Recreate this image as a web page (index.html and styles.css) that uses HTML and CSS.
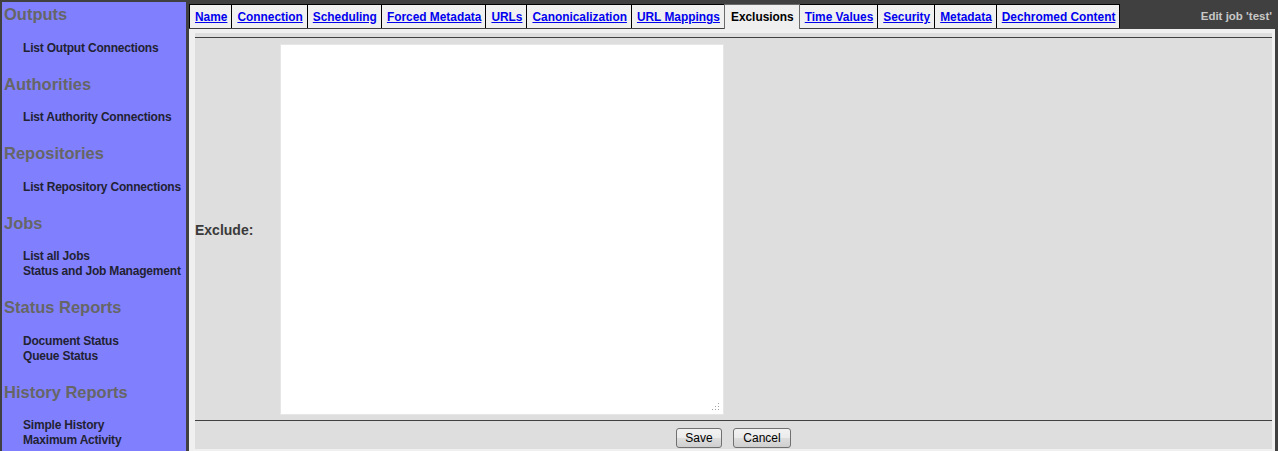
FILE: index.html
```html
<!DOCTYPE html>
<html>
<head>
<meta charset="utf-8">
<title>Edit job</title>
<link rel="stylesheet" href="styles.css">
</head>
<body>
<div class="page">
  <nav class="sidebar">
    <div class="nav-section">
      <div class="nav-head">Outputs</div>
      <ul class="nav-links"><li>List Output Connections</li></ul>
    </div>
    <div class="nav-section">
      <div class="nav-head">Authorities</div>
      <ul class="nav-links"><li>List Authority Connections</li></ul>
    </div>
    <div class="nav-section">
      <div class="nav-head">Repositories</div>
      <ul class="nav-links"><li>List Repository Connections</li></ul>
    </div>
    <div class="nav-section">
      <div class="nav-head">Jobs</div>
      <ul class="nav-links"><li>List all Jobs</li><li>Status and Job Management</li></ul>
    </div>
    <div class="nav-section">
      <div class="nav-head">Status Reports</div>
      <ul class="nav-links"><li>Document Status</li><li>Queue Status</li></ul>
    </div>
    <div class="nav-section">
      <div class="nav-head">History Reports</div>
      <ul class="nav-links"><li>Simple History</li><li>Maximum Activity</li></ul>
    </div>
  </nav>
  <main class="main">
    <div class="header">
      <div class="tabs">
        <a class="tab first" href="#">Name</a>
        <a class="tab" href="#">Connection</a>
        <a class="tab" href="#">Scheduling</a>
        <a class="tab" href="#">Forced Metadata</a>
        <a class="tab" href="#">URLs</a>
        <a class="tab" href="#">Canonicalization</a>
        <a class="tab" href="#">URL Mappings</a>
        <span class="tab active">Exclusions</span>
        <a class="tab" href="#">Time Values</a>
        <a class="tab" href="#">Security</a>
        <a class="tab" href="#">Metadata</a>
        <a class="tab" href="#">Dechromed Content</a>
      </div>
      <div class="title">Edit job 'test'</div>
    </div>
    <div class="frame">
      <div class="panel">
        <div class="rule"></div>
        <div class="field-row">
          <div class="field-label">Exclude:</div>
          <div class="field-input">
            <textarea class="exclude-box"></textarea>
            <svg class="grip" width="8" height="8" viewBox="0 0 8 8">
              <rect x="6" y="0" width="1" height="1" fill="#a0a0a0"/>
              <rect x="3" y="3" width="1" height="1" fill="#a0a0a0"/>
              <rect x="6" y="3" width="1" height="1" fill="#a0a0a0"/>
              <rect x="0" y="6" width="1" height="1" fill="#a0a0a0"/>
              <rect x="3" y="6" width="1" height="1" fill="#a0a0a0"/>
              <rect x="6" y="6" width="1" height="1" fill="#a0a0a0"/>
            </svg>
          </div>
        </div>
        <div class="rule rule-bottom"></div>
        <div class="buttons">
          <button class="btn save" type="button">Save</button>
          <button class="btn cancel" type="button">Cancel</button>
        </div>
      </div>
    </div>
  </main>
</div>
</body>
</html>
```
FILE: styles.css
```css
html, body {
  margin: 0;
  padding: 0;
}
body {
  background: #404040;
  font-family: "Liberation Sans", Arial, sans-serif;
  overflow: hidden;
}
.page {
  display: flex;
  height: 451px;
  padding-left: 2px;
  padding-right: 3px;
  gap: 3px;
  box-sizing: border-box;
}
.sidebar {
  width: 184px;
  flex: none;
  margin-top: 2px;
  padding: 2px 0 0 2px;
  box-sizing: border-box;
  background: #8080ff;
}
.nav-head {
  font-size: 16.5px;
  font-weight: bold;
  color: #666666;
  line-height: 20px;
  white-space: nowrap;
}
.nav-links {
  list-style: none;
  margin: 16.5px 0 18px 0;
  padding: 0 0 0 19px;
  font-size: 12px;
  letter-spacing: -0.2px;
  font-weight: bold;
  color: #222233;
  line-height: 15px;
  white-space: nowrap;
}
.main {
  flex: 1;
  display: flex;
  flex-direction: column;
  min-width: 0;
}
.header {
  height: 29px;
  flex: none;
  display: flex;
  align-items: flex-start;
  justify-content: space-between;
  padding-top: 4px;
  box-sizing: border-box;
}
.tabs {
  display: flex;
  align-items: flex-start;
}
.tab {
  display: block;
  height: 24px;
  line-height: 24px;
  box-sizing: border-box;
  padding: 0 4px 0 5px;
  background: #f0f0f0;
  border-top: 1px solid #000;
  border-right: 1px solid #000;
  font-size: 11.9px;
  font-weight: bold;
  color: #0000ee;
  text-decoration: underline;
  white-space: nowrap;
}
.tab.first {
  border-left: 1px solid #000;
}
.tab.active {
  height: 25px;
  color: #000;
  text-decoration: none;
  border-top: 1px solid #6a6a6a;
  border-right: 1px solid #6a6a6a;
  border-left: 1px solid #6a6a6a;
  margin-left: -1px;
  padding-left: 6px;
  padding-right: 5px;
  background: #efefef;
}
.title {
  line-height: 24px;
  padding-right: 3px;
  font-size: 11.5px;
  font-weight: bold;
  color: #c8c8c8;
  white-space: nowrap;
}
.frame {
  flex: 1;
  background: #f0f0f0;
  padding: 4px 3px 2px 6px;
  display: flex;
  flex-direction: column;
}
.panel {
  flex: 1;
  background: #dedede;
  padding-top: 4px;
  display: flex;
  flex-direction: column;
}
.rule {
  height: 1px;
  background: #404040;
  flex: none;
}
.field-row {
  display: flex;
  align-items: center;
  margin-top: 6px;
}
.field-label {
  width: 85px;
  flex: none;
  font-size: 14px;
  font-weight: bold;
  color: #3a3a3a;
}
.field-input {
  position: relative;
  width: 444px;
  height: 371px;
}
.exclude-box {
  display: block;
  width: 444px;
  height: 371px;
  box-sizing: border-box;
  margin: 0;
  border: 1px solid #e6e6e6;
  background: #ffffff;
  resize: none;
  outline: none;
}
.grip {
  position: absolute;
  right: 4px;
  bottom: 4px;
}
.rule-bottom {
  margin-top: 5px;
}
.buttons {
  display: flex;
  justify-content: center;
  gap: 11px;
  margin-top: 7px;
}
.btn {
  height: 20px;
  box-sizing: border-box;
  margin: 0;
  padding: 0;
  border: 1px solid #707070;
  border-radius: 3px;
  background: linear-gradient(to bottom, #f2f2f2 0%, #ebebeb 50%, #dddddd 51%, #cfcfcf 100%);
  font-family: "Liberation Sans", Arial, sans-serif;
  font-size: 12px;
  color: #000;
  line-height: 18px;
}
.save {
  width: 46px;
}
.cancel {
  width: 58px;
}
```
